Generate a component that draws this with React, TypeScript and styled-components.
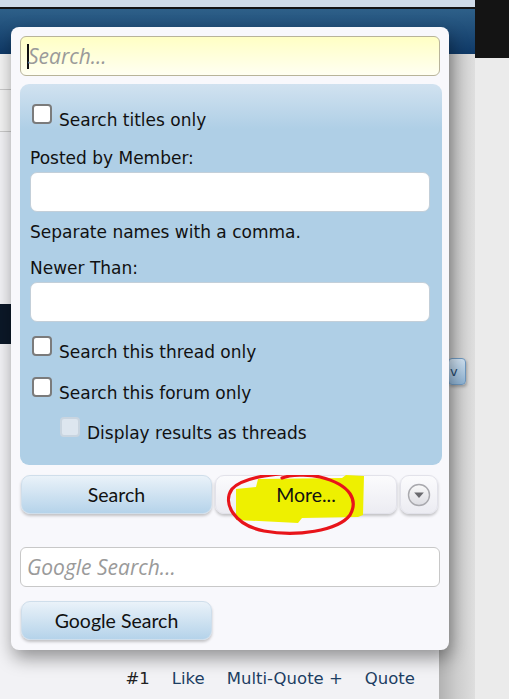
import styled, { createGlobalStyle } from "styled-components";

const GlobalStyle = createGlobalStyle`
  html, body { margin: 0; padding: 0; }
  body {
    width: 509px;
    height: 699px;
    overflow: hidden;
    background: #ebebeb;
    font-family: "Open Sans", "DejaVu Sans", sans-serif;
  }
`;

const Page = styled.div`
  width: 509px;
  height: 699px;
  display: grid;
  grid-template-columns: 475px 34px;
`;

const MainCol = styled.div`
  position: relative;
  overflow: hidden;
  display: flex;
  flex-direction: column;
`;

const SideCol = styled.div`
  background: linear-gradient(#141414 0 58px, #ebebeb 58px);
`;

const TopStrip = styled.div`
  height: 7px;
  background: #cfdbe8;
  border-bottom: 2px solid #141414;
`;

const Header = styled.div`
  height: 45px;
  background: linear-gradient(#2e6089, #0f3967);
`;

const Body = styled.div`
  flex: 1;
  display: grid;
  grid-template-columns: 439px 36px;
`;

const Content = styled.div`
  display: flex;
  flex-direction: column;
  background: #f2f2f5;
`;

const Gutter = styled.div`
  background: linear-gradient(90deg, #b2b2b2, #cdcdcd 50%, #dedede);
  padding: 304px 0 0 9px;
`;

const SubNav = styled.div<{ h: number }>`
  height: ${({ h }) => h}px;
  border-bottom: 1px solid #c9c9c9;
  background: #f3f3f3;
`;

const Spacer = styled.div<{ h?: number }>`
  ${({ h }) => (h ? `height: ${h}px;` : "flex: 1;")}
`;

const NavBand = styled.div`
  height: 40px;
  background: #0b1828;
`;

const ToolButton = styled.div`
  position: relative;
  width: 18px;
  height: 27px;
  border-radius: 4px;
  background: linear-gradient(#cfe1f1, #8fb3d3);
  border: 1px solid #6e98bf;
  box-sizing: border-box;
  color: #24476b;
  font-family: "DejaVu Sans", sans-serif;
  font-size: 13px;
  display: flex;
  align-items: center;
  justify-content: flex-start;
  padding-left: 1px;
  box-shadow: 1px 2px 3px rgba(0, 0, 0, 0.25);
`;

const PostFooter = styled.div`
  display: flex;
  justify-content: flex-end;
  align-items: center;
  gap: 22px;
  height: 42px;
  padding-right: 24px;
  font-family: "DejaVu Sans", sans-serif;
  font-size: 16.5px;
`;

const FooterLink = styled.span<{ muted?: boolean }>`
  color: ${({ muted }) => (muted ? "#222" : "#1d3e63")};
`;

const Popup = styled.div`
  position: absolute;
  left: 11px;
  top: 27px;
  width: 438px;
  height: 623px;
  box-sizing: border-box;
  padding: 9px 9px 0 9px;
  background: #f8f8fc;
  border-radius: 8px;
  box-shadow: 2px 8px 18px rgba(0, 0, 0, 0.4);
  display: flex;
  flex-direction: column;
`;

const TextInput = styled.div<{ tone: "yellow" | "white" }>`
  height: 40px;
  box-sizing: border-box;
  border-radius: 6px;
  border: 1px solid ${({ tone }) => (tone === "yellow" ? "#b8b49a" : "#c8c8c8")};
  background: ${({ tone }) =>
    tone === "yellow" ? "linear-gradient(#ffffc4, #fffff2)" : "#ffffff"};
  display: flex;
  align-items: center;
  padding-left: 6px;
  font-family: "Open Sans", sans-serif;
  font-style: italic;
  font-size: 21px;
  color: #9a9a9a;
`;

const Caret = styled.span`
  width: 2px;
  height: 25px;
  background: #111;
  margin-right: -1px;
`;

const Panel = styled.div`
  margin-top: 8px;
  margin-right: -2px;
  height: 381px;
  box-sizing: border-box;
  border-radius: 9px;
  background: linear-gradient(#d1e2f0 0px, #afcfe6 45px);
  padding: 20px 10px 0 10px;
  font-family: "DejaVu Sans", sans-serif;
  font-size: 17px;
  color: #111;
  display: flex;
  flex-direction: column;
`;

const CheckRow = styled.label<{ indent?: boolean; mt?: number }>`
  display: flex;
  align-items: flex-start;
  gap: 7px;
  margin-left: ${({ indent }) => (indent ? "30px" : "2px")};
  margin-top: ${({ mt }) => mt ?? 0}px;
  height: 25px;
`;

const Box = styled.span<{ disabled?: boolean }>`
  width: 20px;
  height: 20px;
  box-sizing: border-box;
  border-radius: 4px;
  border: 2px solid ${({ disabled }) => (disabled ? "#c9d5e0" : "#7b7b7b")};
  background: ${({ disabled }) => (disabled ? "#dde6ef" : "#ffffff")};
  flex: none;
`;

const CheckText = styled.span`
  margin-top: 5px;
  line-height: 22px;
`;

const Label = styled.div<{ mt: number }>`
  margin-top: ${({ mt }) => mt}px;
  height: 22px;
  line-height: 22px;
`;

const Field = styled.div<{ mt: number }>`
  margin-top: ${({ mt }) => mt}px;
  height: 40px;
  width: 400px;
  box-sizing: border-box;
  border-radius: 7px;
  background: #fff;
  border: 1px solid #c3cfd9;
`;

const ButtonRow = styled.div`
  position: relative;
  display: flex;
  gap: 3px;
  margin-top: 10px;
  padding-left: 1px;
`;

const Btn = styled.div<{ kind: "blue" | "plain"; w: number }>`
  width: ${({ w }) => w}px;
  height: 39px;
  box-sizing: border-box;
  border-radius: 9px;
  display: flex;
  align-items: center;
  justify-content: center;
  font-family: "Lato", "Open Sans", sans-serif;
  font-size: 19.5px;
  color: #111;
  background: ${({ kind }) =>
    kind === "blue"
      ? "linear-gradient(#eaf2f9, #b5d3ea)"
      : "linear-gradient(#fbfbfd, #ececf2)"};
  border: 1px solid ${({ kind }) => (kind === "blue" ? "#cfdeeb" : "#e2e2ea")};
  box-shadow: 0 2px 3px rgba(0, 0, 0, 0.22);
`;

const ButtonLabel = styled.span`
  position: relative;
  z-index: 2;
`;

const Marker = styled.svg`
  position: absolute;
  left: 0;
  top: 0;
  pointer-events: none;
  z-index: 1;
`;

const GoogleInput = styled(TextInput)`
  margin-top: 33px;
`;

const GoogleBtn = styled(Btn)`
  margin-top: 14px;
  margin-left: 1px;
`;

const Check = ({
  text,
  indent,
  disabled,
  mt,
}: {
  text: string;
  indent?: boolean;
  disabled?: boolean;
  mt?: number;
}) => (
  <CheckRow indent={indent} mt={mt}>
    <Box disabled={disabled} />
    <CheckText>{text}</CheckText>
  </CheckRow>
);

const App = () => {
  return (
    <>
      <GlobalStyle />
      <Page>
        <MainCol>
          <TopStrip />
          <Header />
          <Body>
            <Content>
              <SubNav h={35} />
              <SubNav h={41} />
              <Spacer h={172} />
              <NavBand />
              <Spacer />
              <PostFooter>
                <FooterLink muted>#1</FooterLink>
                <FooterLink>Like</FooterLink>
                <FooterLink>Multi-Quote +</FooterLink>
                <FooterLink>Quote</FooterLink>
              </PostFooter>
            </Content>
            <Gutter>
              <ToolButton>v</ToolButton>
            </Gutter>
          </Body>

          <Popup>
            <TextInput tone="yellow">
              <Caret />
              Search...
            </TextInput>
            <Panel>
              <Check text="Search titles only" />
              <Label mt={18}>Posted by Member:</Label>
              <Field mt={3} />
              <Label mt={9}>Separate names with a comma.</Label>
              <Label mt={14}>Newer Than:</Label>
              <Field mt={3} />
              <Check text="Search this thread only" mt={14} />
              <Check text="Search this forum only" mt={16} />
              <Check text="Display results as threads" indent disabled mt={15} />
            </Panel>
            <ButtonRow>
              <Btn kind="blue" w={191}>
                Search
              </Btn>
              <Btn kind="plain" w={182}>
                <ButtonLabel>More...</ButtonLabel>
              </Btn>
              <Btn kind="plain" w={38}>
                <svg width="24" height="24" viewBox="0 0 24 24">
                  <defs>
                    <linearGradient id="dd" x1="0" y1="0" x2="0" y2="1">
                      <stop offset="0" stopColor="#fafafa" />
                      <stop offset="1" stopColor="#dcdce2" />
                    </linearGradient>
                  </defs>
                  <circle cx="12" cy="12" r="10.5" fill="url(#dd)" stroke="#a9a9ae" strokeWidth="1.4" />
                  <path d="M7.2 9.6 H16.8 L12 15 Z" fill="#6a6a6e" />
                </svg>
              </Btn>
              <Marker width="420" height="70" viewBox="0 0 420 70">
                <path
                  d="M216 14 L236 12 L238 4 L322 3 L326 0 L344 1 L343 40 L338 42 L282 43 L278 48 L216 45 Z"
                  fill="#eef000"
                />
                <path
                  d="M292 -1 C262 -4 222 2 212 14 C202 28 214 50 244 56 C276 62 318 56 330 40 C338 26 332 10 300 2 C288 -1 270 0 262 3"
                  fill="none"
                  stroke="#e8141a"
                  strokeWidth="3.2"
                  strokeLinecap="round"
                />
              </Marker>
            </ButtonRow>
            <GoogleInput tone="white">Google Search...</GoogleInput>
            <GoogleBtn kind="blue" w={191}>
              Google Search
            </GoogleBtn>
          </Popup>
        </MainCol>
        <SideCol />
      </Page>
    </>
  );
};

export default App;
